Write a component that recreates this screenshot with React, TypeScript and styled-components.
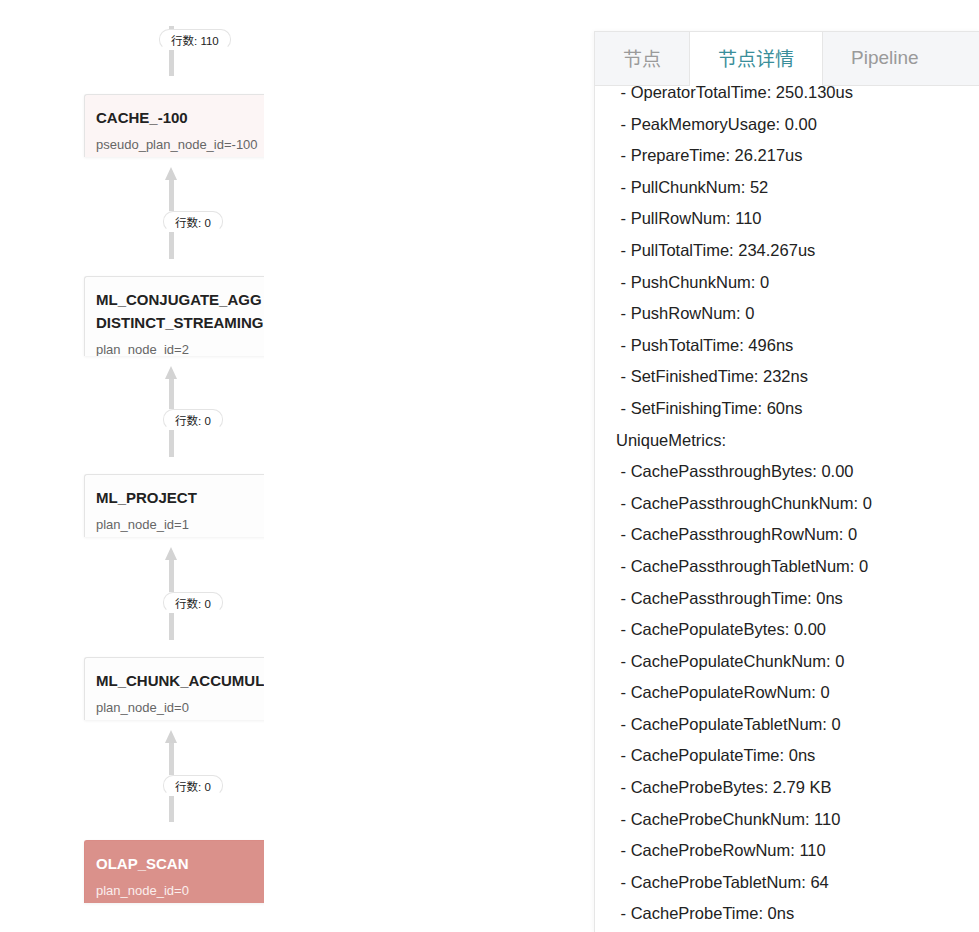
import React from "react";
import styled, { createGlobalStyle } from "styled-components";

const GlobalStyle = createGlobalStyle`
  html, body { margin: 0; padding: 0; background: #ffffff; }
  body { font-family: "Liberation Sans", Arial, "Noto Sans CJK SC", sans-serif; overflow: hidden; }
  #root { width: 979px; height: 932px; }
`;

const Page = styled.div`
  display: flex;
  width: 979px;
  height: 932px;
  overflow: hidden;
`;

const Canvas = styled.div`
  width: 264px;
  flex: none;
  overflow: hidden;
  display: flex;
  flex-direction: column;
  padding: 26px 0 0 84px;
  box-sizing: border-box;
`;

const EdgeBox = styled.div<{ $h: number }>`
  height: ${(p) => p.$h}px;
  display: flex;
  flex-direction: column;
  align-items: flex-start;
`;

const Arrow = styled.div`
  margin: 10px 0 0 81px;
  width: 0;
  height: 0;
  border-left: 6px solid transparent;
  border-right: 6px solid transparent;
  border-bottom: 13px solid #d3d3d3;
`;

const Line = styled.div<{ $h: number }>`
  margin-left: 85px;
  width: 5px;
  height: ${(p) => p.$h}px;
  background: #d6d6d6;
  flex: none;
`;

const Label = styled.div<{ $ml: number }>`
  margin-left: ${(p) => p.$ml}px;
  height: 21px;
  box-sizing: border-box;
  padding: 0 11px;
  display: flex;
  align-items: center;
  background: #ffffff;
  border: 1px solid #e4e4e4;
  border-bottom-color: transparent;
  border-radius: 10px;
  font-size: 11.5px;
  color: #222;
  font-family: "Liberation Sans", Arial, "Noto Sans CJK SC", sans-serif;
  white-space: nowrap;
  flex: none;
`;

type Tone = "cache" | "plain" | "scan";

const NodeCard = styled.div<{ $tone: Tone; $h: number }>`
  width: 240px;
  height: ${(p) => p.$h}px;
  flex: none;
  overflow: hidden;
  box-sizing: border-box;
  padding: 11px 0 0 11px;
  border-top: 1px solid ${(p) => (p.$tone === "scan" ? "#d98c86" : "#e4e4e4")};
  border-left: 1px solid ${(p) => (p.$tone === "scan" ? "#d98c86" : "#e4e4e4")};
  border-radius: 3px 0 0 0;
  box-shadow: 0 1px 3px rgba(0, 0, 0, 0.06);
  background: ${(p) =>
    p.$tone === "cache" ? "#fcf5f5" : p.$tone === "scan" ? "#da918b" : "#fdfdfd"};
  color: ${(p) => (p.$tone === "scan" ? "#ffffff" : "#222222")};
`;

const NodeTitle = styled.div`
  font-size: 15px;
  font-weight: bold;
  line-height: 23px;
  white-space: nowrap;
`;

const NodeSub = styled.div<{ $tone: Tone }>`
  margin-top: 7px;
  font-size: 13px;
  line-height: 18px;
  white-space: nowrap;
  color: ${(p) => (p.$tone === "scan" ? "#fbeeed" : "#666666")};
`;

const Panel = styled.div`
  margin: 31px 0 0 330px;
  width: 385px;
  flex: none;
  display: flex;
  flex-direction: column;
  border-left: 1px solid #e6e6e6;
  border-top: 1px solid #e6e6e6;
  box-shadow: -1px 0 4px rgba(0, 0, 0, 0.04);
  background: #ffffff;
  overflow: hidden;
`;

const TabBar = styled.div`
  display: flex;
  height: 54px;
  flex: none;
`;

const Tab = styled.div<{ $active?: boolean; $grow?: boolean }>`
  padding: 0 28px 2px;
  display: flex;
  align-items: center;
  font-size: 19px;
  font-family: "Liberation Sans", Arial, "Noto Sans CJK SC", sans-serif;
  color: ${(p) => (p.$active ? "#3a8e9a" : "#9a9a9a")};
  background: ${(p) => (p.$active ? "#ffffff" : "#f5f6f8")};
  border-right: 1px solid #e6e6e6;
  border-bottom: 1px solid ${(p) => (p.$active ? "#ffffff" : "#e6e6e6")};
  flex: ${(p) => (p.$grow ? "1" : "none")};
  white-space: nowrap;
`;

const Content = styled.div`
  flex: 1;
  overflow: hidden;
  padding-left: 21px;
`;

const MetricList = styled.div`
  margin-top: -9px;
  display: flex;
  flex-direction: column;
`;

const Metric = styled.div`
  font-size: 16.5px;
  line-height: 31.6px;
  color: #222;
  white-space: pre;
`;

const metrics = [
  " - OperatorTotalTime: 250.130us",
  " - PeakMemoryUsage: 0.00",
  " - PrepareTime: 26.217us",
  " - PullChunkNum: 52",
  " - PullRowNum: 110",
  " - PullTotalTime: 234.267us",
  " - PushChunkNum: 0",
  " - PushRowNum: 0",
  " - PushTotalTime: 496ns",
  " - SetFinishedTime: 232ns",
  " - SetFinishingTime: 60ns",
  "UniqueMetrics:",
  " - CachePassthroughBytes: 0.00",
  " - CachePassthroughChunkNum: 0",
  " - CachePassthroughRowNum: 0",
  " - CachePassthroughTabletNum: 0",
  " - CachePassthroughTime: 0ns",
  " - CachePopulateBytes: 0.00",
  " - CachePopulateChunkNum: 0",
  " - CachePopulateRowNum: 0",
  " - CachePopulateTabletNum: 0",
  " - CachePopulateTime: 0ns",
  " - CacheProbeBytes: 2.79 KB",
  " - CacheProbeChunkNum: 110",
  " - CacheProbeRowNum: 110",
  " - CacheProbeTabletNum: 64",
  " - CacheProbeTime: 0ns",
];

type EdgeProps = { rows: string; arrow?: boolean; total: number; before: number; after: number; ml?: number };

const Edge: React.FC<EdgeProps> = ({ rows, arrow = true, total, before, after, ml = 79 }) => (
  <EdgeBox $h={total}>
    {arrow && <Arrow />}
    <Line $h={before} />
    <Label $ml={ml}>行数: {rows}</Label>
    <Line $h={after} />
  </EdgeBox>
);

type NodeProps = { titles: string[]; sub: string; tone: Tone; h: number };

const Node: React.FC<NodeProps> = ({ titles, sub, tone, h }) => (
  <NodeCard $tone={tone} $h={h}>
    {titles.map((t) => (
      <NodeTitle key={t}>{t}</NodeTitle>
    ))}
    <NodeSub $tone={tone}>{sub}</NodeSub>
  </NodeCard>
);

export default function App() {
  return (
    <>
      <GlobalStyle />
      <Page>
        <Canvas>
          <Edge rows="110" arrow={false} total={68} before={3} after={26} ml={75} />
          <Node titles={["CACHE_-100"]} sub="pseudo_plan_node_id=-100" tone="cache" h={63} />
          <Edge rows="0" total={119} before={31} after={27} />
          <Node
            titles={["ML_CONJUGATE_AGG", "DISTINCT_STREAMING"]}
            sub="plan_node_id=2"
            tone="plain"
            h={80}
          />
          <Edge rows="0" total={118} before={30} after={27} />
          <Node titles={["ML_PROJECT"]} sub="plan_node_id=1" tone="plain" h={63} />
          <Edge rows="0" total={120} before={32} after={27} />
          <Node titles={["ML_CHUNK_ACCUMULATE"]} sub="plan_node_id=0" tone="plain" h={63} />
          <Edge rows="0" total={120} before={32} after={26} />
          <Node titles={["OLAP_SCAN"]} sub="plan_node_id=0" tone="scan" h={63} />
        </Canvas>
        <Panel>
          <TabBar>
            <Tab>节点</Tab>
            <Tab $active>节点详情</Tab>
            <Tab $grow>Pipeline</Tab>
          </TabBar>
          <Content>
            <MetricList>
              {metrics.map((m) => (
                <Metric key={m}>{m}</Metric>
              ))}
            </MetricList>
          </Content>
        </Panel>
      </Page>
    </>
  );
}
